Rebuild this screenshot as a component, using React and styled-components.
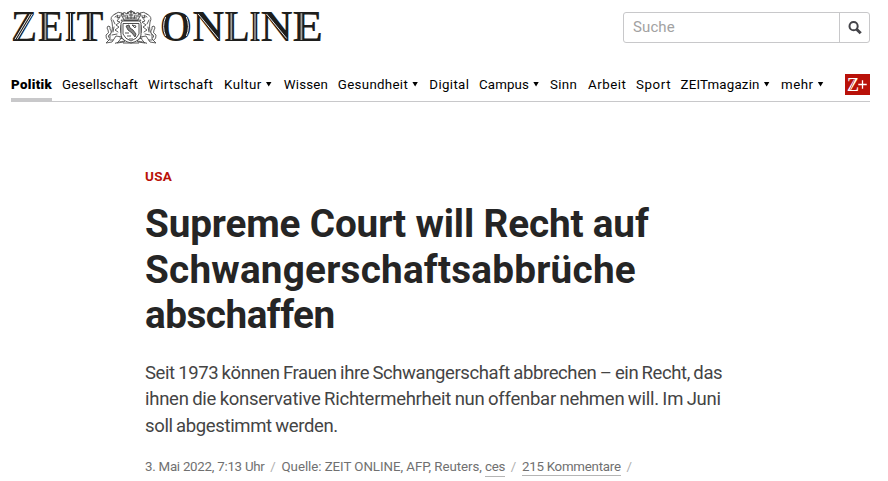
import React from 'react';
import styled, { createGlobalStyle } from 'styled-components';

const GlobalStyle = createGlobalStyle`
  * { box-sizing: border-box; }
  body { margin: 0; background: #fff; font-family: Roboto, "Liberation Sans", sans-serif; }
`;

const Page = styled.div`
  width: 888px;
  height: 481px;
  overflow: hidden;
  padding: 0 18px 0 11px;
`;
const TopBar = styled.header`
  display: flex;
  justify-content: space-between;
  align-items: flex-start;
  height: 66px;
`;
const LogoSvg = styled.svg`
  display: block;
  width: 320px;
  height: 60px;
`;
const SearchForm = styled.form`
  display: flex;
  width: 247px;
  height: 31px;
  margin-top: 12px;
  border: 1px solid #c8c8ca;
  border-radius: 3px;
`;
const SearchInput = styled.input`
  flex: 1;
  min-width: 0;
  border: 0;
  outline: 0;
  background: none;
  padding: 0 9px 2px;
  font: 15px Roboto, sans-serif;
  letter-spacing: 0.1px;
  &::placeholder { color: #a2a2a2; opacity: 1; }
`;
const SearchButton = styled.button`
  display: flex;
  align-items: center;
  justify-content: center;
  width: 30px;
  padding: 0;
  border: 0;
  border-left: 1px solid #c8c8ca;
  background: none;
`;
const Nav = styled.nav`
  display: flex;
  height: 36px;
  border-bottom: 1px solid #c8c8ca;
`;
const NavSlot = styled.div`
  flex: none;
  width: ${(p) => p.$width}px;
`;
const NavLink = styled.a`
  display: inline-flex;
  align-items: center;
  height: ${(p) => (p.$active ? 36 : 35)}px;
  padding-top: ${(p) => (p.$active ? 5 : 1)}px;
  border-bottom: ${(p) => (p.$active ? '4px solid #c8c8ca' : '0')};
  color: #000;
  font-size: 13.3px;
  font-weight: ${(p) => (p.$active ? 900 : 400)};
  letter-spacing: ${(p) => p.$tracking}px;
  white-space: nowrap;
`;
const Caret = styled.span`
  width: 6px;
  height: 5px;
  margin-left: 4px;
  background: #000;
  clip-path: polygon(0 0, 100% 0, 50% 100%);
`;
const PlusBadge = styled.a`
  flex: none;
  width: 25px;
  height: 21px;
  margin: 8px 0 0 auto;
  background: #b91109;
  svg { display: block; }
`;
const Article = styled.article`
  padding: 65px 0 0 134px;
`;
const Kicker = styled.div`
  height: 18px;
  color: #b91109;
  font-size: 13.5px;
  font-weight: 700;
  line-height: 18px;
  letter-spacing: 0.25px;
`;
const Title = styled.h1`
  margin: 16px 0 0;
  color: #252525;
  font-size: 38.7px;
  font-weight: 700;
  line-height: 45.6px;
`;
const Summary = styled.p`
  margin: 22px 0 0;
  color: #444;
  font-size: 18.5px;
  line-height: 26.6px;
  word-spacing: -0.8px;
`;
const Line = styled.span`
  display: block;
  white-space: nowrap;
  letter-spacing: ${(p) => p.$tracking}px;
`;
const Meta = styled.div`
  display: flex;
  margin-top: 19px;
  color: #707070;
  font-size: 13.3px;
  line-height: 16px;
  white-space: nowrap;
`;
const MetaText = styled.span`
  flex: none;
  width: ${(p) => p.$width}px;
  letter-spacing: ${(p) => p.$tracking || 0}px;
`;
const MetaLink = styled.a`
  height: ${(p) => p.$height}px;
  color: #707070;
  border-bottom: 1px solid #b5b5b5;
  letter-spacing: ${(p) => p.$tracking || 0}px;
`;
const Slash = styled.span`
  width: 17px;
  text-align: center;
  color: #b0b0b0;
`;

const NAV = [
  { label: 'Politik', width: 51, tracking: 0.32, active: true },
  { label: 'Gesellschaft', width: 86, tracking: 0.18 },
  { label: 'Wirtschaft', width: 76, tracking: 0.36 },
  { label: 'Kultur', width: 59.8, tracking: 0.46, menu: true },
  { label: 'Wissen', width: 54, tracking: 0.2 },
  { label: 'Gesundheit', width: 91.5, tracking: 0.32, menu: true },
  { label: 'Digital', width: 49.7, tracking: 0.36 },
  { label: 'Campus', width: 71, tracking: 0.14, menu: true },
  { label: 'Sinn', width: 38, tracking: 0.35 },
  { label: 'Arbeit', width: 48, tracking: 0.52 },
  { label: 'Sport', width: 44.5, tracking: 0.6 },
  { label: 'ZEITmagazin', width: 100.5, tracking: 0.2, menu: true },
  { label: 'mehr', width: 50, tracking: 0.5, menu: true },
];

const LETTERS = [
  ['Z', 0, 26], ['E', 27, 25.5], ['I', 53.7, 11.6], ['T', 65.6, 27],
  ['O', 148.8, 32.4], ['N', 181.4, 31.8], ['L', 213.5, 24.8], ['I', 238.5, 11], ['N', 249.7, 31.8], ['E', 281.7, 30.3],
];

function Lion() {
  return (
    <g fill="#fff" stroke="#4c4c4c" strokeWidth=".9" strokeLinejoin="round" strokeLinecap="round">
      <path d="M98 31 Q94 28 95 25 Q99 23 97 20 Q95 18 97 16 Q100 16 99 19 Q102 23 98 25 Q96 27 100 29" />
      <path d="M104 4 Q107 1 111 3 Q113 4 112 7 L115 9 Q113 11 110 10 Q111 13 116 11 L117 13 Q113 16 110 15 Q109 19 110 23 L115 26 L113 32 L106 33 L108 31 L111 27 L105 26 L101 32 L95 33 L97 31 L99 29 Q98 25 101 21 Q102 17 101 12 Q98 7 104 4Z" />
      <path d="M104 7 L107 5 L106 8 L109 7 L106 11 L109 12 L105 15 L108 17 L104 20 L107 22 M102 10 L104 14 M108 6 h2 M101 25 L106 24 M109 28 L112 29 M99 30 L102 30 M103 17 L102 22" fill="none" />
    </g>
  );
}

function Logo() {
  return (
    <LogoSvg viewBox="0 -10 320 60" role="img" aria-label="ZEIT ONLINE">
      <g fill="#1e1e1c" fontFamily="'Liberation Serif', serif" fontSize="44.5" fontWeight="700">
        {LETTERS.map(([letter, x, width]) => (
          <text key={x} x={x} y="31.3" textLength={width} lengthAdjust="spacingAndGlyphs">{letter}</text>
        ))}
      </g>
      <g fill="none" stroke="#fff" strokeWidth=".9">
        <path d="M19.2 4 L4 29.2 M21.4 4 L6.2 29.2" />
        <path d="M59.5 3.2 V30.2" />
        <path d="M154.6 7 Q150.6 16.5 154.6 26 M175.4 7 Q179.4 16.5 175.4 26" />
        <path d="M187.2 4 L207.4 28.5 M255.5 4 L275.7 28.5" />
        <path d="M244 3.2 V30.2" />
      </g>
      <g fill="none" stroke="#a5a39c" strokeWidth="1.8">
        <path d="M34.4 3.2 V30 M79.1 3.2 V30 M220.3 3.2 V30 M290.4 3.2 V30" />
      </g>
      <g>
        <Lion />
        <g transform="translate(240 0) scale(-1 1)"><Lion /></g>
        <g fill="#fff" stroke="#484848" strokeWidth=".95" strokeLinejoin="round">
          <path d="M110 13 Q111 10 114 11 H126 Q129 10 130 13 V25 Q129 31 120 33 Q111 31 110 25Z" />
          <path d="M112 13.5 H128 V24 Q126 29 120 31 Q114 29 112 24Z" />
          <path d="M110 4 Q114 1 116 4 Q118 0 120 2 Q122 0 124 4 Q126 1 130 4 L127 10 H113Z" fill="#ddd" />
          <path d="M113 10.5 H127 M116 5 L117 9 M120 2 V9 M124 5 L123 9 M112 6 h3 M118 5 h4 M125 6 h3 M114 8 h12" />
          <path d="M115 16 L118 15 L119 18 L122 20 L125 24 L124 27 L121 23 L117 20Z" fill="#888" />
          <path d="M121 15 L125 16 L124 18Z M114 23 h4 M116 26 h4 M118 29 h4" />
          <path d="M104 33.3 Q112 31 114 31 M136 33.3 Q128 31 126 31 M112 33 H128" />
        </g>
        <g fill="#555">
          <circle cx="117" cy="2.8" r="1.1" /><circle cx="120" cy="1.5" r="1.2" /><circle cx="123" cy="2.8" r="1.1" />
          <circle cx="112" cy="4" r="1.1" /><circle cx="128" cy="4" r="1.1" />
        </g>
      </g>
    </LogoSvg>
  );
}

function SearchIcon() {
  return (
    <svg width="14" height="14" viewBox="0 0 14 14" fill="none" stroke="#444449">
      <circle cx="5.6" cy="5.2" r="4.1" strokeWidth="2" />
      <path d="M8.6 8.2 L12.7 12.2" strokeWidth="3" />
    </svg>
  );
}

function PlusMark() {
  return (
    <svg width="25" height="21" viewBox="0 0 25 21" role="img" aria-label="Z+">
      <text x="2" y="16.7" fill="#fff" fontFamily="'Liberation Serif', serif" fontWeight="700" fontSize="19.5" textLength="12" lengthAdjust="spacingAndGlyphs">Z</text>
      <path d="M9.9 5 L4.9 16" stroke="#b91109" strokeWidth=".6" />
      <path d="M13.3 10.5 H21.7 M17.5 6.3 V14.7" stroke="#fff" strokeWidth="1.3" />
    </svg>
  );
}

export default function App() {
  return (
    <Page>
      <GlobalStyle />
      <TopBar>
        <Logo />
        <SearchForm>
          <SearchInput placeholder="Suche" aria-label="Suche" />
          <SearchButton type="button" aria-label="Suchen"><SearchIcon /></SearchButton>
        </SearchForm>
      </TopBar>
      <Nav>
        {NAV.map((item) => (
          <NavSlot key={item.label} $width={item.width}>
            <NavLink $active={item.active} $tracking={item.tracking}>
              {item.label}
              {item.menu && <Caret />}
            </NavLink>
          </NavSlot>
        ))}
        <PlusBadge><PlusMark /></PlusBadge>
      </Nav>
      <Article>
        <Kicker>USA</Kicker>
        <Title>
          <Line $tracking={-0.15}>Supreme Court will Recht auf</Line>
          <Line $tracking={0.22}>Schwangerschaftsabbrüche</Line>
          <Line $tracking={-0.5}>abschaffen</Line>
        </Title>
        <Summary>
          <Line $tracking={-0.4}>Seit 1973 können Frauen ihre Schwangerschaft abbrechen – ein Recht, das</Line>
          <Line $tracking={-0.26}>ihnen die konservative Richtermehrheit nun offenbar nehmen will. Im Juni</Line>
          <Line $tracking={-0.36}>soll abgestimmt werden.</Line>
        </Summary>
        <Meta>
          <MetaText $width={119.5} $tracking={-0.25}>3. Mai 2022, 7:13 Uhr</MetaText>
          <Slash>/</Slash>
          <MetaText $width={203.5} $tracking={-0.05}>Quelle: ZEIT ONLINE, AFP, Reuters,</MetaText>
          <MetaLink $height={18} $tracking={-0.3}>ces</MetaLink>
          <Slash>/</Slash>
          <MetaLink $height={17} $tracking={-0.25}>215 Kommentare</MetaLink>
          <Slash>/</Slash>
        </Meta>
      </Article>
    </Page>
  );
}
